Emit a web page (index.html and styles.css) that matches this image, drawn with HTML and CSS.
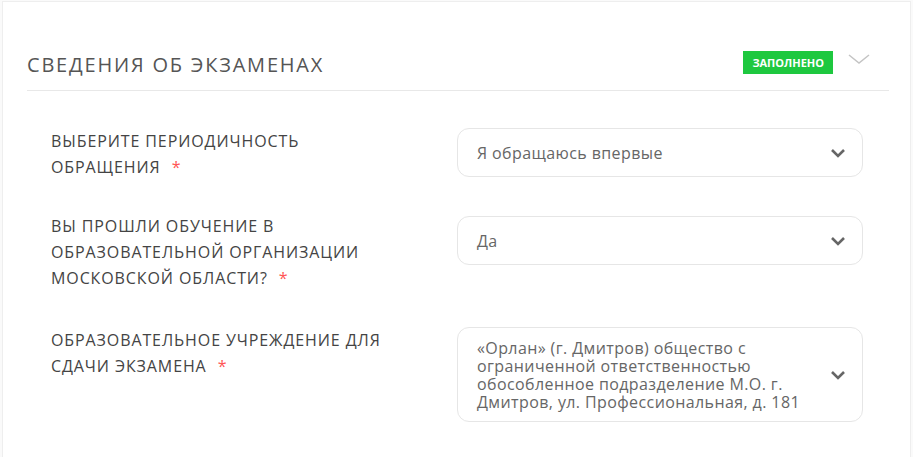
FILE: index.html
```html
<!DOCTYPE html>
<html lang="ru">
<head>
    <meta charset="UTF-8">
    <meta name="viewport" content="width=device-width, initial-scale=1.0">
    <title>Сведения об экзаменах</title>
    <link rel="stylesheet" href="styles.css">
</head>
<body>
    <div class="card">
        <div class="head">
            <h2>Сведения об экзаменах</h2>
            <div class="status">
                <span class="badge">Заполнено</span>
                <svg class="toggle" width="22" height="10" viewBox="0 0 22 10">
                    <polyline points="1,1 11,9 21,1" fill="none" stroke="#c4c4c4" stroke-width="1.5"/>
                </svg>
            </div>
        </div>
        <div class="form">
            <div class="row">
                <div class="label">Выберите периодичность<br>обращения <span class="req">*</span></div>
                <div class="select">
                    <div class="value">Я обращаюсь впервые</div>
                    <svg class="arrow" width="16" height="10" viewBox="0 0 16 10">
                        <polyline points="2,2 8,8 14,2" fill="none" stroke="#666" stroke-width="2.6"/>
                    </svg>
                </div>
            </div>
            <div class="row">
                <div class="label up">Вы прошли обучение в<br>образовательной организации<br>Московской области? <span class="req">*</span></div>
                <div class="select">
                    <div class="value">Да</div>
                    <svg class="arrow" width="16" height="10" viewBox="0 0 16 10">
                        <polyline points="2,2 8,8 14,2" fill="none" stroke="#666" stroke-width="2.6"/>
                    </svg>
                </div>
            </div>
            <div class="row">
                <div class="label">Образовательное учреждение для<br>сдачи экзамена <span class="req">*</span></div>
                <div class="select tall">
                    <div class="value">«Орлан» (г. Дмитров) общество с<br>ограниченной ответственностью<br>обособленное подразделение М.О. г.<br>Дмитров, ул. Профессиональная, д. 181</div>
                    <svg class="arrow" width="16" height="10" viewBox="0 0 16 10">
                        <polyline points="2,2 8,8 14,2" fill="none" stroke="#666" stroke-width="2.6"/>
                    </svg>
                </div>
            </div>
        </div>
    </div>
</body>
</html>
```

FILE: styles.css
```css
*{
    box-sizing: border-box;
}
body{
    margin: 0;
    background-color: #fafafa;
    font-family: "Open Sans", "Noto Sans", sans-serif;
    color: #444;
}
div.card{
    margin: 1px 2px 0 2px;
    background-color: #fff;
    border: 1px solid #eee;
    border-bottom: none;
    height: 456px;
    padding: 0 21px 0 24px;
}
div.head{
    display: flex;
    justify-content: space-between;
    align-items: center;
    height: 89px;
    padding-top: 36px;
    padding-bottom: 0;
    border-bottom: 1px solid #e8e8e8;
}
h2{
    margin: 0;
    font-size: 20px;
    font-weight: 400;
    color: #555;
    text-transform: uppercase;
    letter-spacing: 1.8px;
}
div.status{
    display: flex;
    align-items: center;
    gap: 15px;
    padding-right: 19px;
    margin-top: -4px;
}
span.badge{
    background-color: #1ec83f;
    color: #fff;
    font-size: 11px;
    font-weight: 700;
    text-transform: uppercase;
    padding: 4px 9px;
    letter-spacing: 0;
    line-height: 15px;
}
svg.toggle{
    margin-top: -6px;
}
div.form{
    padding: 37px 26px 0 24px;
}
div.row{
    display: grid;
    grid-template-columns: 406px 1fr;
    align-items: start;
    margin-bottom: 36px;
}
div.label{
    font-size: 16px;
    line-height: 26px;
    text-transform: uppercase;
    color: #444;
    letter-spacing: 0.9px;
}
div.label.up{
    margin-top: -3px;
}
span.req{
    color: #f55;
    margin-left: 6px;
}
div.select{
    display: flex;
    align-items: center;
    justify-content: space-between;
    height: 49px;
    border: 1px solid #e6e6e6;
    border-radius: 12px;
    padding: 0 16px 0 19px;
    color: #666;
    font-size: 16px;
    letter-spacing: 0.4px;
}
div.select.tall{
    height: 95px;
}
div.select.tall .value{
    line-height: 18px;
}
```
